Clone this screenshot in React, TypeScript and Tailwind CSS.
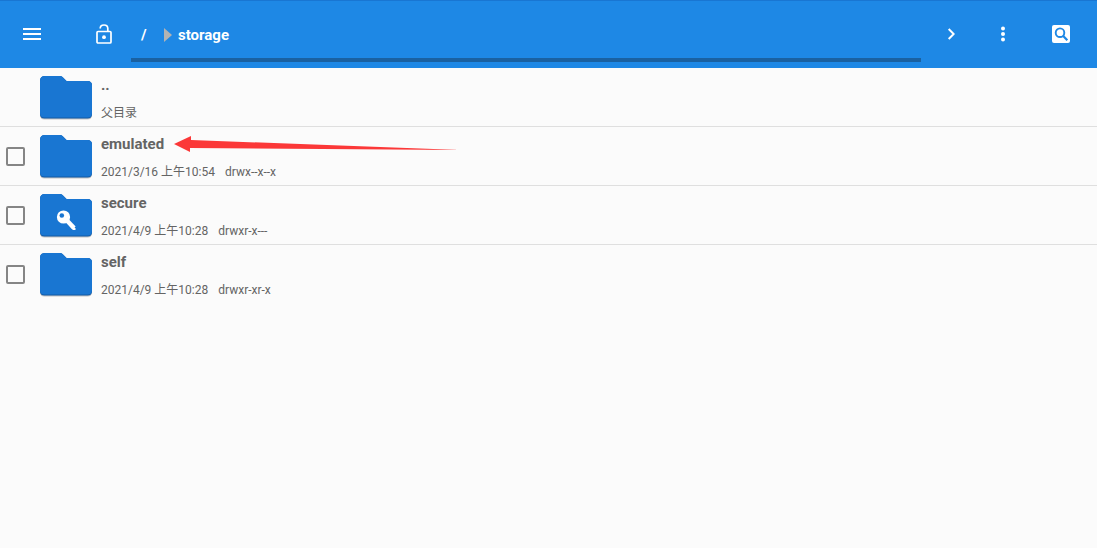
import { useState } from "react";

type Entry = {
  name: string;
  modified?: string;
  mode?: string;
  note?: string;
  locked?: boolean;
};

const entries: Entry[] = [
  { name: "..", note: "父目录" },
  { name: "emulated", modified: "2021/3/16 上午10:54", mode: "drwx--x--x" },
  { name: "secure", modified: "2021/4/9 上午10:28", mode: "drwxr-x---", locked: true },
  { name: "self", modified: "2021/4/9 上午10:28", mode: "drwxr-xr-x" },
];

const FolderIcon = ({ locked }: { locked?: boolean }) => (
  <svg width="54" height="46" viewBox="0 0 54 46" className="shrink-0" aria-hidden="true">
    <path
      d="M6 3H21Q22.500 3 23.500 4L27.500 8H48.500Q53 8 53 12.500V41Q53 45.500 48.500 45.500H5.500Q1 45.500 1 41V8Q1 3 6 3Z"
      fill="#000"
      opacity="0.22"
    />
    <path
      d="M6 2H21Q22.500 2 23.500 3L27.500 7H48.500Q53 7 53 11.500V40Q53 44.500 48.500 44.500H5.500Q1 44.500 1 40V7Q1 2 6 2Z"
      fill="#125aa5"
    />
    <path
      d="M6 2H21Q22.500 2 23.500 3L27.500 7H48.500Q53 7 53 11.500V39Q53 43.500 48.500 43.500H5.500Q1 43.500 1 39V7Q1 2 6 2Z"
      fill="#1976d2"
    />
    {locked && (
      <>
        <path d="M27 27.500L35 36" stroke="#fff" strokeWidth="4.500" strokeLinejoin="round" />
        <path d="M30.500 34L32.500 32L36.500 36.500V38H34Z" fill="#fff" />
        <circle cx="24.500" cy="25" r="6.600" fill="#fff" />
        <circle cx="22.800" cy="23.500" r="2.300" fill="#1976d2" />
      </>
    )}
  </svg>
);

const Toolbar = () => (
  <header className="flex h-[68px] items-stretch border-t border-[#1976d2] bg-[#1e88e5] pb-px text-white">
    <button type="button" aria-label="菜单" className="flex w-16 items-center justify-center">
      <svg width="18" height="12" viewBox="0 0 18 12" fill="currentColor">
        <path d="M0 0H18V2H0ZM0 5H18V7H0ZM0 10H18V12H0Z" />
      </svg>
    </button>
    <button type="button" aria-label="只读" className="ml-3 flex w-[55px] items-center justify-center">
      <svg width="16" height="20" viewBox="0 0 16 20" fill="none" stroke="currentColor" strokeWidth="1.700">
        <rect x="1" y="7.500" width="14" height="11.500" rx="1" />
        <path d="M4.200 4.500C4.200 2.300 5.900 1 8 1S11.800 2.400 11.800 4.600V7.500" />
        <circle cx="8" cy="13.200" r="1.900" fill="currentColor" stroke="none" />
      </svg>
    </button>
    <nav
      aria-label="路径"
      className="mb-[5px] flex min-w-0 flex-1 items-center border-b-4 border-[#1a61a1] pt-2.5 pl-2.5 text-[15px] leading-5 font-bold"
    >
      <a href="#root" className="w-[23px]">/</a>
      <svg width="8" height="14" viewBox="0 0 8 14" className="mr-1.5" aria-hidden="true">
        <path d="M0 0L8 7L0 14Z" fill="#b3b3b3" />
      </svg>
      <a href="#storage">storage</a>
    </nav>
    <button type="button" aria-label="前进" className="flex w-[60px] items-center justify-center">
      <svg width="8" height="12" viewBox="0 0 8 12" fill="none" stroke="currentColor" strokeWidth="2">
        <path d="M1.700 1L6.700 6L1.700 11" />
      </svg>
    </button>
    <button type="button" aria-label="更多" className="flex w-[44px] items-center justify-center">
      <svg width="4" height="16" viewBox="0 0 4 16" fill="currentColor">
        <circle cx="2" cy="2.400" r="2" />
        <circle cx="2" cy="8" r="2" />
        <circle cx="2" cy="13.600" r="2" />
      </svg>
    </button>
    <button type="button" aria-label="搜索" className="flex w-[72px] items-center justify-center">
      <svg width="18" height="18" viewBox="0 0 18 18" fill="none">
        <rect width="18" height="18" rx="2" fill="#fff" />
        <circle cx="8" cy="7.700" r="4.300" stroke="#1e88e5" strokeWidth="1.900" />
        <path d="M11 10.700L15.300 15.200" stroke="#1e88e5" strokeWidth="2.200" />
      </svg>
    </button>
  </header>
);

const FileRow = ({ entry }: { entry: Entry }) => {
  const [checked, setChecked] = useState(false);
  const isParent = entry.name === "..";

  return (
    <li className="flex h-[59px] items-center border-b border-[#dfdfdf] pl-1.5 last:border-transparent">
      <div className="mr-3.5 flex w-[19px] shrink-0">
        {!isParent && (
          <input
            type="checkbox"
            aria-label={entry.name}
            checked={checked}
            onChange={(e) => setChecked(e.target.checked)}
            className="size-[19px] appearance-none rounded-xs border-2 border-[#858585] checked:bg-[#1976d2]"
          />
        )}
      </div>
      <FolderIcon locked={entry.locked} />
      <div className="ml-2 pt-1 text-[#646464]">
        <a href={`#${entry.name}`} className="block text-[15px] leading-7 font-bold">
          {entry.name}
        </a>
        <div className="flex gap-2.5 text-[12px] leading-7">
          {entry.note && <span>{entry.note}</span>}
          {entry.modified && <span>{entry.modified}</span>}
          {entry.mode && <span>{entry.mode}</span>}
        </div>
      </div>
    </li>
  );
};

export default function App() {
  return (
    <div className="relative min-h-screen bg-[#fbfbfb] font-['Roboto','Noto_Sans_CJK_SC',sans-serif]">
      <Toolbar />
      <main>
        <ul>
          {entries.map((entry) => (
            <FileRow key={entry.name} entry={entry} />
          ))}
        </ul>
      </main>
      {/* pointer to the emulated folder */}
      <svg
        width="286"
        height="18"
        viewBox="0 0 286 18"
        className="pointer-events-none absolute top-[135px] left-[174px]"
        aria-hidden="true"
      >
        <path d="M0 9L17 1V5L286 15L16 13V17Z" fill="#fb3838" />
      </svg>
    </div>
  );
}
